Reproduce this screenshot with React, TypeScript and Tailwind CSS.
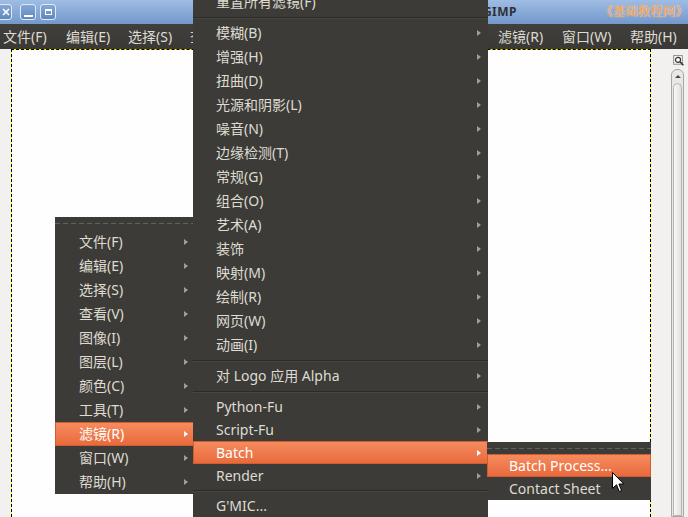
import type { ReactNode } from "react";

const ff = "font-['Noto_Sans','Noto_Sans_CJK_SC',sans-serif]";

type Row =
  | { kind: "item"; label: string; h: string; on?: boolean; arrow?: boolean }
  | { kind: "sep" }
  | { kind: "tear"; h: string };

function Arrow({ on }: { on?: boolean }) {
  return (
    <span
      className={
        on
          ? "h-0 w-0 border-y-[3.5px] border-l-[4px] border-y-transparent border-l-white"
          : "h-0 w-0 border-y-[3.5px] border-l-[4px] border-y-transparent border-l-[#a19e97]"
      }
    />
  );
}

function MenuRows({ rows, pl }: { rows: Row[]; pl: string }) {
  return (
    <>
      {rows.map((r, i) => {
        if (r.kind === "sep")
          return (
            <div key={i} className="h-[7px] pt-[3px]">
              <div className="h-px bg-[#2c2b28]" />
              <div className="h-px bg-[#48473f]" />
            </div>
          );
        if (r.kind === "tear")
          return (
            <div key={i} className={`${r.h} flex items-center`}>
              <div className="h-px w-full bg-[repeating-linear-gradient(to_right,#64625c_0_5px,transparent_5px_8px)]" />
            </div>
          );
        return (
          <div
            key={i}
            className={`flex items-center justify-between ${r.h} ${pl} pr-[7px] whitespace-nowrap ${
              r.on
                ? "bg-linear-to-b from-[#f68d5f] to-[#e8683b] text-white shadow-[inset_0_0_0_1px_#cf5d30]"
                : "text-[#dfdbd2]"
            }`}
          >
            <span>{r.label}</span>
            {r.arrow !== false && <Arrow on={r.on} />}
          </div>
        );
      })}
    </>
  );
}

const item = (label: string, extra: Partial<{ on: boolean; arrow: boolean; h: string }> = {}): Row => ({
  kind: "item",
  label,
  h: extra.h ?? "h-[24px] pb-[1px]",
  on: extra.on,
  arrow: extra.arrow,
});

const filterRows: Row[] = [
  item("重置所有滤镜(F)", { arrow: false }),
  { kind: "sep" },
  ...["模糊(B)", "增强(H)", "扭曲(D)", "光源和阴影(L)", "噪音(N)", "边缘检测(T)", "常规(G)", "组合(O)", "艺术(A)", "装饰", "映射(M)", "绘制(R)", "网页(W)", "动画(I)"].map((l) => item(l)),
  { kind: "sep" },
  item("对 Logo 应用 Alpha"),
  { kind: "sep" },
  item("Python-Fu", { h: "h-[23px]" }),
  item("Script-Fu", { h: "h-[23px]" }),
  item("Batch", { h: "h-[23px]", on: true }),
  item("Render", { h: "h-[23px]" }),
  { kind: "sep" },
  item("G'MIC...", { h: "h-[23px]", arrow: false }),
];

const mainRows: Row[] = [
  { kind: "tear", h: "h-[13px]" },
  ...["文件(F)", "编辑(E)", "选择(S)", "查看(V)", "图像(I)", "图层(L)", "颜色(C)", "工具(T)"].map((l) => item(l)),
  item("滤镜(R)", { on: true }),
  item("窗口(W)"),
  item("帮助(H)"),
];

const batchRows: Row[] = [
  { kind: "tear", h: "h-[12px]" },
  item("Batch Process...", { h: "h-[23px]", on: true, arrow: false }),
  item("Contact Sheet", { h: "h-[23px]", arrow: false }),
];

const menubar: [string, string][] = [
  ["文件(F)", "w-[63px]"],
  ["编辑(E)", "w-[62px]"],
  ["选择(S)", "w-[62px]"],
  ["查看(V)", "w-[62px]"],
  ["图像(I)", "w-[61px]"],
  ["图层(L)", "w-[62px]"],
  ["颜色(C)", "w-[62px]"],
  ["工具(T)", "w-[61px]"],
  ["滤镜(R)", "w-[64px]"],
  ["窗口(W)", "w-[68px]"],
  ["帮助(H)", "w-[58px]"],
];

function WinButton({ children, className }: { children: ReactNode; className: string }) {
  return (
    <div
      className={`flex h-[16px] w-[16px] items-center justify-center rounded-[3px] border border-[#e1e9f5] bg-linear-to-b from-[#86a8d6] to-[#5f87c0] ${className}`}
    >
      {children}
    </div>
  );
}

export default function App() {
  return (
    <div className={`relative h-[517px] w-[688px] overflow-hidden bg-[#f2f1f0] ${ff}`}>
      {/* title bar */}
      <div className="flex h-[24px] items-center bg-linear-to-b from-[#9fbde4] to-[#7398cb]">
        <WinButton className="ml-[-4px]">
          <svg width="8" height="8" viewBox="0 0 8 8" className="ml-[4px]">
            <path d="M1 1L7 7M7 1L1 7" stroke="white" strokeWidth="1.6" />
          </svg>
        </WinButton>
        <WinButton className="ml-[8px]">
          <div className="mt-[8px] h-[2px] w-[9px] bg-white" />
        </WinButton>
        <WinButton className="ml-[4px]">
          <div className="h-[6px] w-[7px] border border-white border-t-2" />
        </WinButton>
        <div className="w-[461px] text-right text-[12px] font-bold tracking-[0.5px] text-[#2f3136]">GIMP</div>
        <div className="ml-auto text-[12.5px] text-[#f7a24a] [text-shadow:0_0_1px_#dce8f7]">《基础教程网》</div>
      </div>

      {/* menubar */}
      <div className="flex h-[25px] items-center bg-linear-to-b from-[#403f3b] to-[#3a3935] pb-[1px] pl-[3px] text-[14px] text-[#dfdbd2]">
        {menubar.map(([l, w]) => (
          <div key={l} className={`${w} shrink-0 whitespace-nowrap`}>
            {l}
          </div>
        ))}
      </div>

      {/* work area */}
      <div className="flex h-[468px]">
        <div className="w-[11px] shrink-0" />
        <div className="w-[640px] shrink-0 bg-[#ffff00]">
          <div className="h-full border-x border-t border-dashed border-black bg-[#fefefe] bg-clip-padding" />
        </div>
        <div className="flex flex-1 flex-col pl-[20px] pt-[6px]">
          <svg width="11" height="11" viewBox="0 0 11 11" className="ml-[2px]">
            <rect x="0.5" y="0.5" width="9" height="9" fill="none" stroke="#333" strokeDasharray="1 1" />
            <circle cx="5" cy="5" r="2.6" fill="#fff" stroke="#333" strokeWidth="1.2" />
            <path d="M7 7L10.5 10.5" stroke="#333" strokeWidth="1.6" />
          </svg>
          <div className="mt-[3px] flex h-[460px] w-[13px] flex-col rounded-t-[6px] border border-[#a8a8a6] bg-[#e9e8e6]">
            <div className="flex h-[13px] items-center justify-center">
              <span className="h-0 w-0 border-x-[3px] border-b-[3px] border-x-transparent border-b-[#4a4a4a]" />
            </div>
            <div className="mx-[1px] flex-1 rounded-t-[5px] border border-[#b5b4b1] bg-linear-to-r from-[#f7f7f6] to-[#e2e1df]" />
          </div>
        </div>
      </div>

      {/* image menu */}
      <div className="absolute left-[55px] top-[217px] w-[140px] bg-[#3c3b37] text-[14px]">
        <MenuRows rows={mainRows} pl="pl-[24px]" />
      </div>

      {/* filters submenu */}
      <div className="absolute left-[193px] top-[-10px] w-[295px] bg-[#3c3b37] text-[14px]">
        <MenuRows rows={filterRows} pl="pl-[23px]" />
      </div>

      {/* batch submenu */}
      <div className="absolute left-[487px] top-[442px] w-[164px] bg-[#3c3b37] text-[14px]">
        <MenuRows rows={batchRows} pl="pl-[22px]" />
      </div>

      {/* pointer */}
      <svg width="13" height="21" viewBox="0 0 13 21" className="absolute left-[612px] top-[472px]">
        <path d="M0.5 0.5V16.5L4.5 12.8L7.3 19.5L9.6 18.5L6.9 12H11.8Z" fill="white" stroke="black" strokeWidth="1" strokeLinejoin="round" />
      </svg>
    </div>
  );
}
